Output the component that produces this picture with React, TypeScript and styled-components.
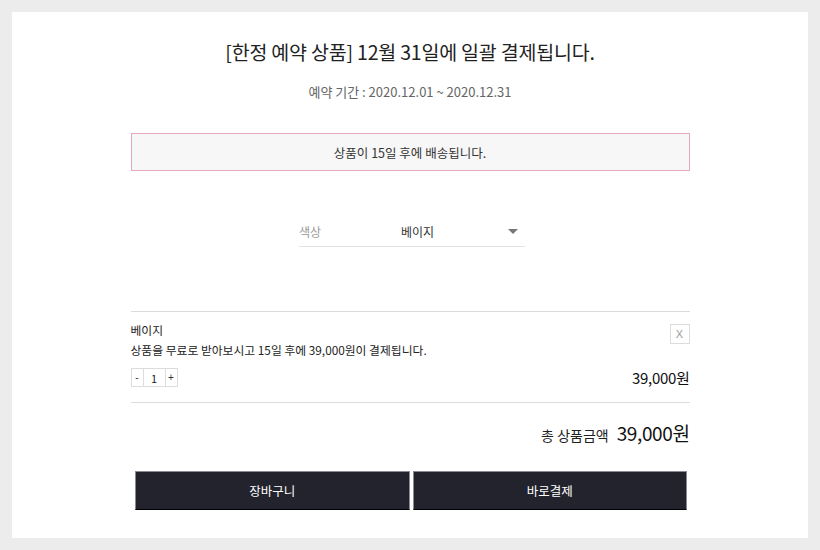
import React, { useState } from "react";
import styled, { createGlobalStyle } from "styled-components";

const GlobalStyle = createGlobalStyle`
  html, body {
    margin: 0;
    padding: 0;
    background: #ececec;
  }
  body {
    font-family: "Noto Sans CJK KR", "Noto Sans", sans-serif;
    color: #222;
  }
  * {
    box-sizing: border-box;
  }
`;

const Page = styled.div`
  width: 820px;
  height: 550px;
  padding: 12px;
  background: #ececec;
`;

const Card = styled.div`
  height: 526px;
  background: #fff;
  display: flex;
  flex-direction: column;
  align-items: center;
  padding-top: 27px;
`;

const Title = styled.h2`
  margin: 0;
  font-size: 19.5px;
  font-weight: 400;
  line-height: 26px;
  color: #222;
  letter-spacing: -0.01em;
`;

const Period = styled.p`
  margin: 18px 0 0;
  font-size: 13px;
  line-height: 18px;
  color: #666;
`;

const Content = styled.div`
  width: 559px;
  display: flex;
  flex-direction: column;
`;

const Notice = styled.div`
  margin-top: 32px;
  height: 38px;
  border: 1px solid #e8a8b8;
  background: #f7f7f7;
  display: flex;
  align-items: center;
  justify-content: center;
  font-size: 12.5px;
  color: #333;
`;

const SelectRow = styled.div`
  margin-top: 46px;
  display: flex;
  justify-content: center;
  padding-left: 4px;
`;

const SelectBox = styled.div`
  width: 226px;
  height: 30px;
  display: flex;
  align-items: center;
  border-bottom: 1px solid #e2e2e2;
  font-size: 12px;
`;

const SelectLabel = styled.span`
  width: 102px;
  color: #999;
`;

const SelectValue = styled.span`
  flex: 1;
  color: #333;
`;

const Caret = styled.span`
  width: 0;
  height: 0;
  margin-right: 7px;
  border-left: 5px solid transparent;
  border-right: 5px solid transparent;
  border-top: 5px solid #777;
`;

const Divider = styled.div`
  height: 1px;
  background: #dcdcdc;
`;

const ItemBlock = styled.div`
  margin-top: 64px;
`;

const Item = styled.div`
  padding: 9px 0 14px;
  display: flex;
  flex-direction: column;
`;

const ItemHead = styled.div`
  display: flex;
  justify-content: space-between;
  align-items: flex-start;
`;

const ItemText = styled.div`
  font-size: 11.8px;
  line-height: 18px;
  color: #222;

  & + & {
    margin-top: 2px;
  }
`;

const RemoveButton = styled.button`
  width: 20px;
  height: 20px;
  margin-top: 3px;
  padding: 0;
  border: 1px solid #dcdcdc;
  background: #fff;
  color: #999;
  font-family: "Liberation Sans", sans-serif;
  font-size: 11px;
  line-height: 18px;
  cursor: pointer;
`;

const ItemFoot = styled.div`
  margin-top: 8px;
  display: flex;
  justify-content: space-between;
  align-items: center;
`;

const Qty = styled.div`
  display: flex;
  height: 19px;
  border: 1px solid #dcdcdc;
`;

const QtyButton = styled.button`
  width: 11px;
  padding: 0;
  border: none;
  background: #fff;
  font-family: "Liberation Sans", sans-serif;
  font-size: 10px;
  color: #333;
  cursor: pointer;
`;

const QtyValue = styled.span`
  width: 23px;
  border-left: 1px solid #dcdcdc;
  border-right: 1px solid #dcdcdc;
  display: flex;
  align-items: center;
  justify-content: center;
  font-size: 11px;
  color: #222;
`;

const Price = styled.span<{ $size: number }>`
  font-size: ${(p) => p.$size}px;
  color: #111;
  letter-spacing: -0.02em;
`;

const TotalRow = styled.div`
  margin-top: 16px;
  display: flex;
  justify-content: flex-end;
  align-items: baseline;
  gap: 8px;
`;

const TotalLabel = styled.span`
  font-size: 14px;
  color: #222;
`;

const Buttons = styled.div`
  margin-top: 25px;
  width: 552px;
  margin-left: 2px;
  display: flex;
  gap: 3px;
`;

const ActionButton = styled.button`
  flex: 1;
  height: 39px;
  border: 1px solid #8a8a94;
  border-bottom-color: #000;
  background: #23232d;
  color: #fff;
  font-family: "Noto Sans CJK KR", sans-serif;
  font-size: 12.5px;
  cursor: pointer;
`;

const format = (n: number) => n.toLocaleString("en-US");

const App = () => {
  const [qty, setQty] = useState(1);
  const unit = 39000;

  return (
    <>
      <GlobalStyle />
      <Page>
        <Card>
          <Title>[한정 예약 상품] 12월 31일에 일괄 결제됩니다.</Title>
          <Period>예약 기간 : 2020.12.01 ~ 2020.12.31</Period>
          <Content>
            <Notice>상품이 15일 후에 배송됩니다.</Notice>
            <SelectRow>
              <SelectBox>
                <SelectLabel>색상</SelectLabel>
                <SelectValue>베이지</SelectValue>
                <Caret />
              </SelectBox>
            </SelectRow>
            <ItemBlock>
              <Divider />
              <Item>
                <ItemHead>
                  <div>
                    <ItemText>베이지</ItemText>
                    <ItemText>
                      상품을 무료로 받아보시고 15일 후에 39,000원이 결제됩니다.
                    </ItemText>
                  </div>
                  <RemoveButton>X</RemoveButton>
                </ItemHead>
                <ItemFoot>
                  <Qty>
                    <QtyButton onClick={() => setQty(Math.max(1, qty - 1))}>-</QtyButton>
                    <QtyValue>{qty}</QtyValue>
                    <QtyButton onClick={() => setQty(qty + 1)}>+</QtyButton>
                  </Qty>
                  <Price $size={15}>{format(unit * qty)}원</Price>
                </ItemFoot>
              </Item>
              <Divider />
            </ItemBlock>
            <TotalRow>
              <TotalLabel>총 상품금액</TotalLabel>
              <Price $size={19}>{format(unit * qty)}원</Price>
            </TotalRow>
          </Content>
          <Buttons>
            <ActionButton>장바구니</ActionButton>
            <ActionButton>바로결제</ActionButton>
          </Buttons>
        </Card>
      </Page>
    </>
  );
};

export default App;
